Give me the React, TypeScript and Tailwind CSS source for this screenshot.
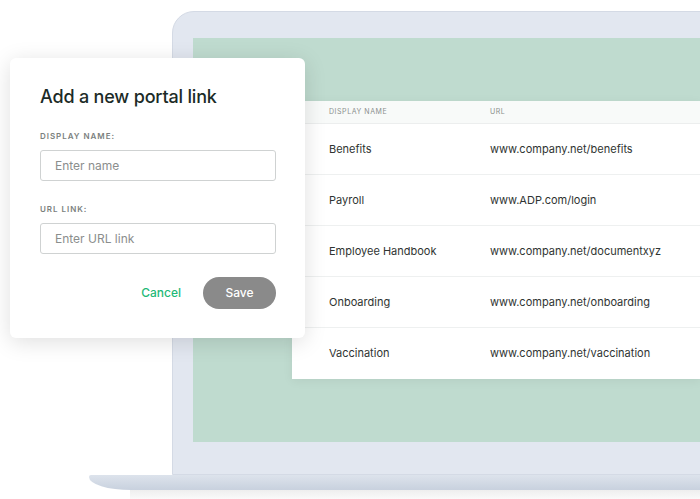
import React from "react";

const links = [
    { name: "Benefits", url: "www.company.net/benefits" },
    { name: "Payroll", url: "www.ADP.com/login" },
    { name: "Employee Handbook", url: "www.company.net/documentxyz" },
    { name: "Onboarding", url: "www.company.net/onboarding" },
    { name: "Vaccination", url: "www.company.net/vaccination" },
];

function LinksTable() {
    return (
        <div className="w-[408px] bg-white shadow-[0_2px_10px_rgba(0,0,0,0.06)]">
            <div className="h-[23px] flex items-center bg-[#f8faf9] border-b border-[#eceeee] text-[7px] tracking-[0.08em] text-[#8a8f8d] uppercase">
                <span className="w-[198px] pl-[37px]">Display Name</span>
                <span>URL</span>
            </div>
            {links.map((l, i) => (
                <div
                    key={l.name}
                    className={`h-[51px] flex items-center text-[11px] text-[#2f3432] ${i < links.length - 1 ? "border-b border-[#eef0f0]" : ""}`}
                >
                    <span className="w-[198px] pl-[37px]">{l.name}</span>
                    <span>{l.url}</span>
                </div>
            ))}
        </div>
    );
}

function PortalDialog() {
    return (
        <div className="absolute left-[10px] top-[58px] w-[295px] h-[280px] bg-white rounded-[6px] shadow-[0_4px_22px_rgba(0,0,0,0.13)] px-[30px] pt-[30px]">
            <h2 className="text-[18px] font-medium text-[#1c2b27] tracking-[-0.01em] leading-none">Add a new portal link</h2>

            <label className="block mt-[26px] text-[8px] leading-none font-semibold tracking-[0.12em] text-[#7b7f7e]">DISPLAY NAME:</label>
            <div className="mt-[10px] h-[31px] w-[236px] border border-[#cfd2d2] rounded-[3px] flex items-center pl-[14px] text-[12px] text-[#8b8e8d]">
                Enter name
            </div>

            <label className="block mt-[24px] text-[8px] leading-none font-semibold tracking-[0.12em] text-[#7b7f7e]">URL LINK:</label>
            <div className="mt-[10px] h-[31px] w-[236px] border border-[#cfd2d2] rounded-[3px] flex items-center pl-[14px] text-[12px] text-[#8b8e8d]">
                Enter URL link
            </div>

            <div className="mt-[23px] w-[236px] flex items-center justify-end gap-[22px]">
                <button className="text-[12px] font-medium text-[#1fb978]">Cancel</button>
                <button className="h-[32px] w-[73px] rounded-full bg-[#8a8a8a] text-white text-[12px] font-medium">Save</button>
            </div>
        </div>
    );
}

export default function App() {
    return (
        <div className="relative w-[700px] h-[499px] bg-white overflow-hidden font-['Inter',sans-serif]">
            {/* laptop lid */}
            <div className="absolute left-[172px] top-[11px] w-[560px] h-[464px] bg-[#e2e7f0] border border-[#d4dae5] rounded-tl-[22px] pl-[20px] pt-[26px] pb-[32px]">
                <div className="h-full bg-[#bfdbcf] pl-[99px] pt-[63px]">
                    <LinksTable />
                </div>
            </div>
            {/* laptop base */}
            <div className="absolute left-[89px] top-[475px] w-[640px] h-[15px] bg-gradient-to-b from-[#dde3ec] to-[#c8d1de] rounded-tl-[2px] rounded-bl-[45px_14px]" />
            <div className="absolute left-[130px] top-[490px] w-[600px] h-[9px] bg-gradient-to-b from-[#eeeeee] to-[#fafafa]" />

            <PortalDialog />
        </div>
    );
}
